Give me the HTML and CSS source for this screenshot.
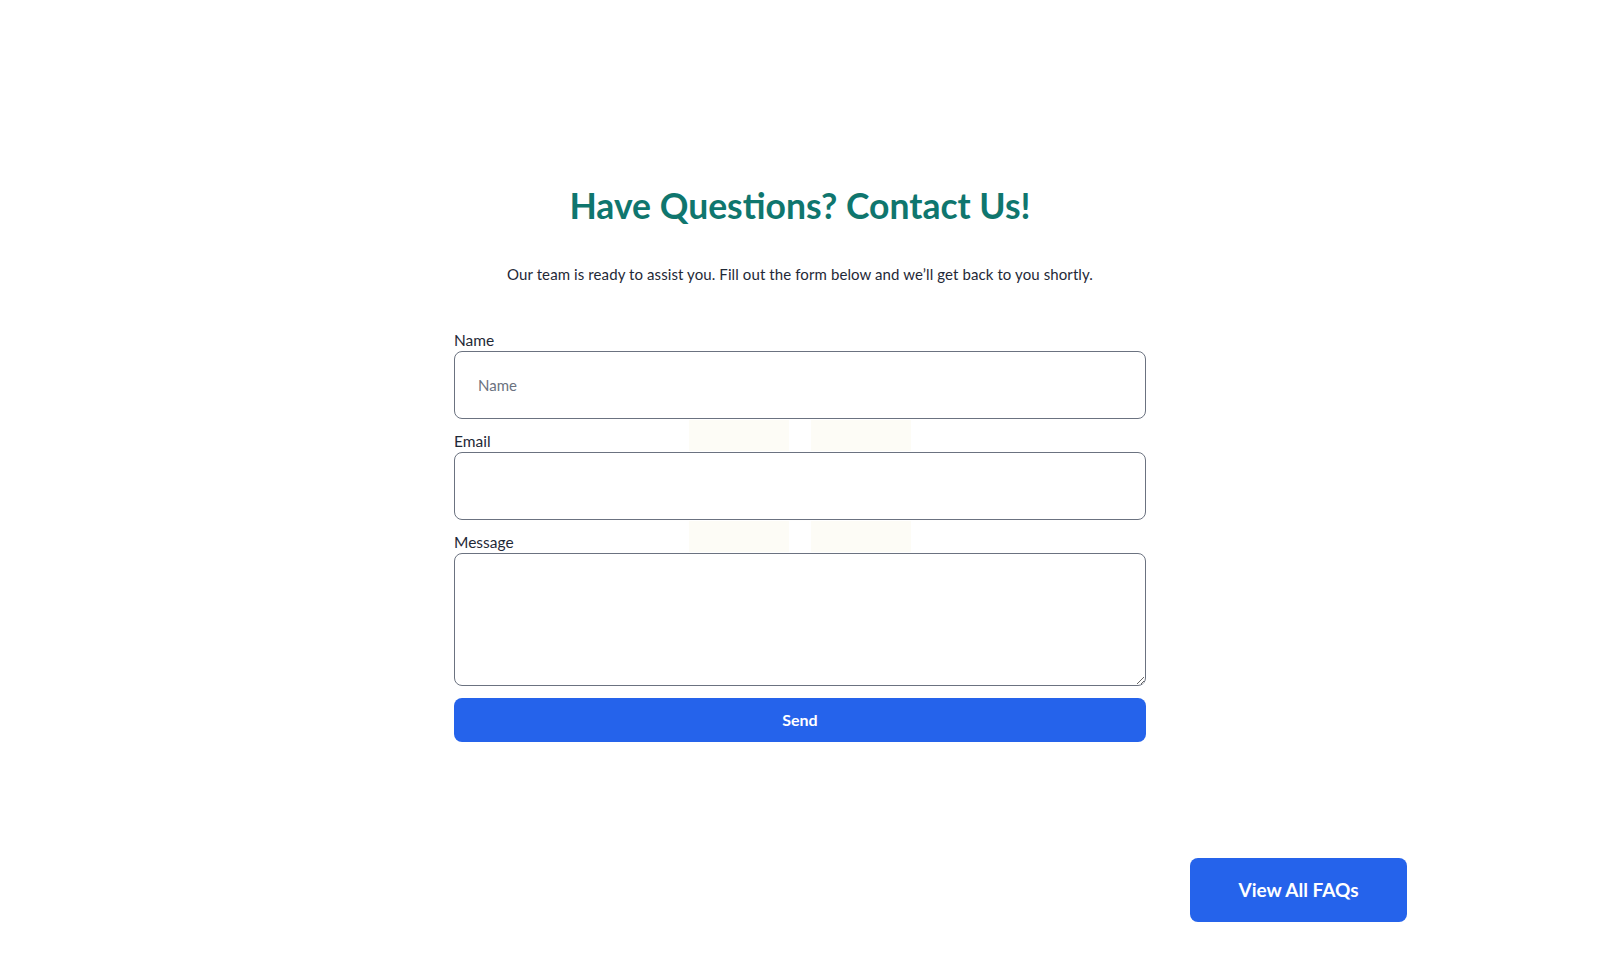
FILE: index.html
```html
<!DOCTYPE html>
<html lang="en">
<head>
<meta charset="utf-8">
<title>Contact Us</title>
<link rel="stylesheet" href="styles.css">
</head>
<body>
<main class="page">
  <section class="contact">
    <h1 class="title">Have Questions? Contact Us!</h1>
    <p class="lead">Our team is ready to assist you. Fill out the form below and we’ll get back to you shortly.</p>
    <form class="form">
      <div class="deco deco-a1"></div>
      <div class="deco deco-a2"></div>
      <div class="deco deco-b1"></div>
      <div class="deco deco-b2"></div>
      <div class="field">
        <label class="label" for="name">Name</label>
        <input class="input" id="name" type="text" placeholder="Name">
      </div>
      <div class="field">
        <label class="label" for="email">Email</label>
        <input class="input" id="email" type="email">
      </div>
      <div class="field">
        <label class="label" for="message">Message</label>
        <textarea class="textarea" id="message"></textarea>
      </div>
      <button class="send" type="button">Send</button>
    </form>
  </section>
  <div class="faq-row">
    <a class="faq-btn" href="#">View All FAQs</a>
  </div>
</main>
</body>
</html>
```

FILE: styles.css
```css
* { box-sizing: border-box; }

html, body {
  margin: 0;
  background: #ffffff;
  font-family: "Lato", "Noto Sans", "Liberation Sans", sans-serif;
  color: #1f2937;
}

.page {
  padding-top: 186px;
}

.contact {
  display: flex;
  flex-direction: column;
  align-items: center;
}

.title {
  margin: 0;
  font-size: 35.5px;
  line-height: 40px;
  font-weight: 700;
  color: #0f766e;
  text-align: center;
}

.lead {
  margin: 36px 0 0;
  font-size: 15px;
  line-height: 24px;
  letter-spacing: 0.1px;
  color: #1f2937;
  text-align: center;
}

.form {
  position: relative;
  width: 692px;
  margin-top: 44px;
  display: flex;
  flex-direction: column;
  gap: 12px;
}

.deco {
  position: absolute;
  width: 100px;
  height: 31px;
  background: #fdfcf6;
  z-index: 0;
}
.deco-a1 { left: 235px; top: 90px; }
.deco-a2 { left: 357px; top: 90px; }
.deco-b1 { left: 235px; top: 191px; }
.deco-b2 { left: 357px; top: 191px; }

.field {
  position: relative;
  z-index: 1;
  display: flex;
  flex-direction: column;
}

.label {
  display: block;
  font-size: 15.5px;
  line-height: 20px;
  margin-bottom: 1px;
  color: #1f2937;
}

.input,
.textarea {
  width: 100%;
  border: 1px solid #6b7280;
  border-radius: 8px;
  background: #ffffff;
  font-family: inherit;
  font-size: 15px;
  color: #1f2937;
  padding: 0 23px;
}

.input {
  height: 68px;
}

.input::placeholder {
  color: #6b7280;
}

.textarea {
  display: block;
  height: 133px;
  padding: 12px 23px;
  resize: vertical;
}

.send {
  position: relative;
  z-index: 1;
  height: 44px;
  border: none;
  border-radius: 8px;
  background: #2563eb;
  color: #ffffff;
  font-family: inherit;
  font-size: 16px;
  font-weight: 700;
  padding-bottom: 2px;
}

.faq-row {
  display: flex;
  justify-content: flex-end;
  padding-right: 193px;
  margin-top: 116px;
}

.faq-btn {
  display: flex;
  align-items: center;
  justify-content: center;
  width: 217px;
  height: 64px;
  padding-bottom: 2px;
  border-radius: 8px;
  background: #2563eb;
  color: #ffffff;
  font-size: 19px;
  font-weight: 700;
  text-decoration: none;
}
```
